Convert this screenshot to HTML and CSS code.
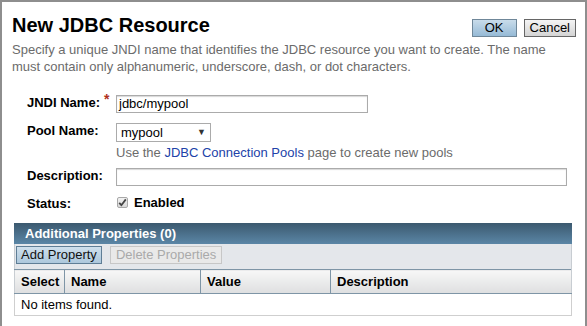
FILE: index.html
```html
<!DOCTYPE html>
<html>
<head>
<meta charset="utf-8">
<link rel="stylesheet" href="styles.css">
</head>
<body>
<div class="page">
  <div class="head">
    <h1 class="title">New JDBC Resource</h1>
    <div class="actions">
      <button class="btn btn-primary">OK</button>
      <button class="btn">Cancel</button>
    </div>
  </div>
  <p class="intro">Specify a unique JNDI name that identifies the JDBC resource you want to create. The name must contain only alphanumeric, underscore, dash, or dot characters.</p>

  <div class="form">
    <div class="row row-jndi">
      <div class="label">JNDI Name:<span class="req">*</span></div>
      <div class="field"><div class="input input-jndi">jdbc/mypool</div></div>
    </div>
    <div class="row row-pool">
      <div class="label">Pool Name:</div>
      <div class="field">
        <div class="select"><span>mypool</span><span class="arrow">&#9660;</span></div>
        <div class="help">Use the <span class="link">JDBC Connection Pools</span> page to create new pools</div>
      </div>
    </div>
    <div class="row row-desc">
      <div class="label">Description:</div>
      <div class="field"><div class="input input-desc"></div></div>
    </div>
    <div class="row row-status">
      <div class="label">Status:</div>
      <div class="field check-field">
        <span class="checkbox"><svg width="9" height="9" viewBox="0 0 9 9"><path d="M1.2 4.8 L3.4 7.2 L7.8 1.4" fill="none" stroke="#444" stroke-width="1.8"/></svg></span>
        <span class="check-label">Enabled</span>
      </div>
    </div>
  </div>

  <div class="props">
    <div class="props-title">Additional Properties (0)</div>
    <div class="toolbar">
      <button class="tbtn">Add Property</button>
      <button class="tbtn tbtn-disabled">Delete Properties</button>
    </div>
    <table class="grid">
      <thead>
        <tr>
          <th class="c-sel">Select</th>
          <th class="c-name">Name</th>
          <th class="c-val">Value</th>
          <th class="c-desc">Description</th>
        </tr>
      </thead>
      <tbody>
        <tr><td colspan="4">No items found.</td></tr>
      </tbody>
    </table>
  </div>
</div>
</body>
</html>
```

FILE: styles.css
```css
html, body {
  margin: 0;
  padding: 0;
  background: #fff;
}
body {
  font-family: "Liberation Sans", Arial, sans-serif;
  font-size: 13px;
  color: #000;
}
.page {
  box-sizing: border-box;
  width: 587px;
  height: 326px;
  border: 2px solid #8e8e8e;
  border-bottom: none;
  overflow: hidden;
}
.head {
  display: flex;
  justify-content: space-between;
  align-items: flex-start;
  padding: 11px 9px 0 10px;
}
.title {
  margin: 0;
  font-size: 20px;
  line-height: 24px;
  font-weight: bold;
}
.actions {
  display: flex;
  gap: 7px;
  padding-top: 6px;
}
.btn {
  box-sizing: border-box;
  height: 18px;
  margin: 0;
  padding: 0 5px;
  font-family: inherit;
  font-size: 13px;
  line-height: 14px;
  color: #000;
  border: 1px solid #666;
  border-radius: 0;
  background: linear-gradient(#f4f4f4, #d4d4d4);
}
.btn-primary {
  width: 45px;
  background: linear-gradient(#c9dcea, #96bad6);
  border-color: #6f8799;
}
.intro {
  margin: 4px 0 0 0;
  padding: 0 12px 0 10px;
  color: #6b6b6b;
  line-height: 17px;
}
.form {
  padding: 20px 0 0 25px;
}
.row {
  display: flex;
  align-items: flex-start;
}
.label {
  width: 89px;
  flex: none;
  font-weight: bold;
  line-height: 13px;
  padding-top: 1px;
  position: relative;
}
.req {
  position: absolute;
  left: 77px;
  top: -2px;
  color: #b0301c;
  font-size: 14px;
  font-weight: bold;
}
.row-pool { margin-top: 10px; }
.row-desc { margin-top: 7px; }
.row-status { margin-top: 10px; }
.input {
  box-sizing: border-box;
  height: 18px;
  border: 1px solid #ababab;
  box-shadow: inset 0 1px 1px #d8d8d8;
  padding: 0 2px;
  line-height: 16px;
  background: #fff;
}
.input-jndi { width: 252px; }
.input-desc { width: 451px; }
.select {
  box-sizing: border-box;
  width: 95px;
  height: 19px;
  border: 1px solid #ababab;
  display: flex;
  align-items: center;
  justify-content: space-between;
  padding: 0 4px 0 4px;
  line-height: 17px;
}
.arrow {
  font-size: 9px;
  color: #333;
}
.help {
  margin-top: 2px;
  color: #6b6b6b;
  line-height: 17px;
}
.link { color: #2142a8; }
.check-field {
  display: flex;
  align-items: center;
  gap: 6px;
}
.checkbox {
  box-sizing: border-box;
  width: 11px;
  height: 11px;
  margin-left: 1px;
  border: 1px solid #a8a8a8;
  border-radius: 2px;
  background: linear-gradient(#f2f2f2, #d8d8d8);
  display: flex;
  align-items: center;
  justify-content: center;
}
.check-label {
  font-weight: bold;
  line-height: 13px;
}
.props {
  margin: 13px 13px 0 12px;
}
.props-title {
  height: 21px;
  line-height: 21px;
  padding-left: 11px;
  color: #fff;
  font-weight: bold;
  background: linear-gradient(#3b596f, #5b86a6);
}
.toolbar {
  height: 25px;
  background: #e4e7eb;
  border-left: 1px solid #c8cdd2;
  border-right: 1px solid #c8cdd2;
  padding: 2px 0 0 1px;
  box-sizing: border-box;
  display: flex;
  gap: 8px;
  align-items: flex-start;
}
.tbtn {
  box-sizing: border-box;
  height: 18px;
  margin: 0;
  padding: 0 4px;
  font-family: inherit;
  font-size: 13px;
  line-height: 14px;
  color: #111;
  border: 1px solid #5f7e96;
  border-radius: 0;
  background: linear-gradient(#cfe0ec, #adc8dc);
}
.tbtn-disabled {
  color: #a9a9a9;
  border-color: #c7c7c7;
  background: #e9e9e9;
  padding: 0 5px;
}
.grid {
  width: 100%;
  border-collapse: collapse;
  table-layout: fixed;
}
.grid th {
  height: 24px;
  box-sizing: border-box;
  text-align: left;
  font-weight: bold;
  padding: 0 6px;
  background: linear-gradient(#f7f7f7, #dedfe0);
  border-top: 1px solid #7e95a6;
  border-bottom: 1px solid #7e95a6;
  border-left: 1px solid #7e95a6;
  border-right: 1px solid #7e95a6;
}
.grid th:first-child { border-left-color: #c8cdd2; }
.grid th:last-child { border-right-color: #c8cdd2; }
.c-sel { width: 50px; }
.c-name { width: 136px; }
.c-val { width: 130px; }
.grid td {
  height: 21px;
  padding: 0 6px;
  border: 1px solid #cfcfcf;
  border-top: none;
}
```
